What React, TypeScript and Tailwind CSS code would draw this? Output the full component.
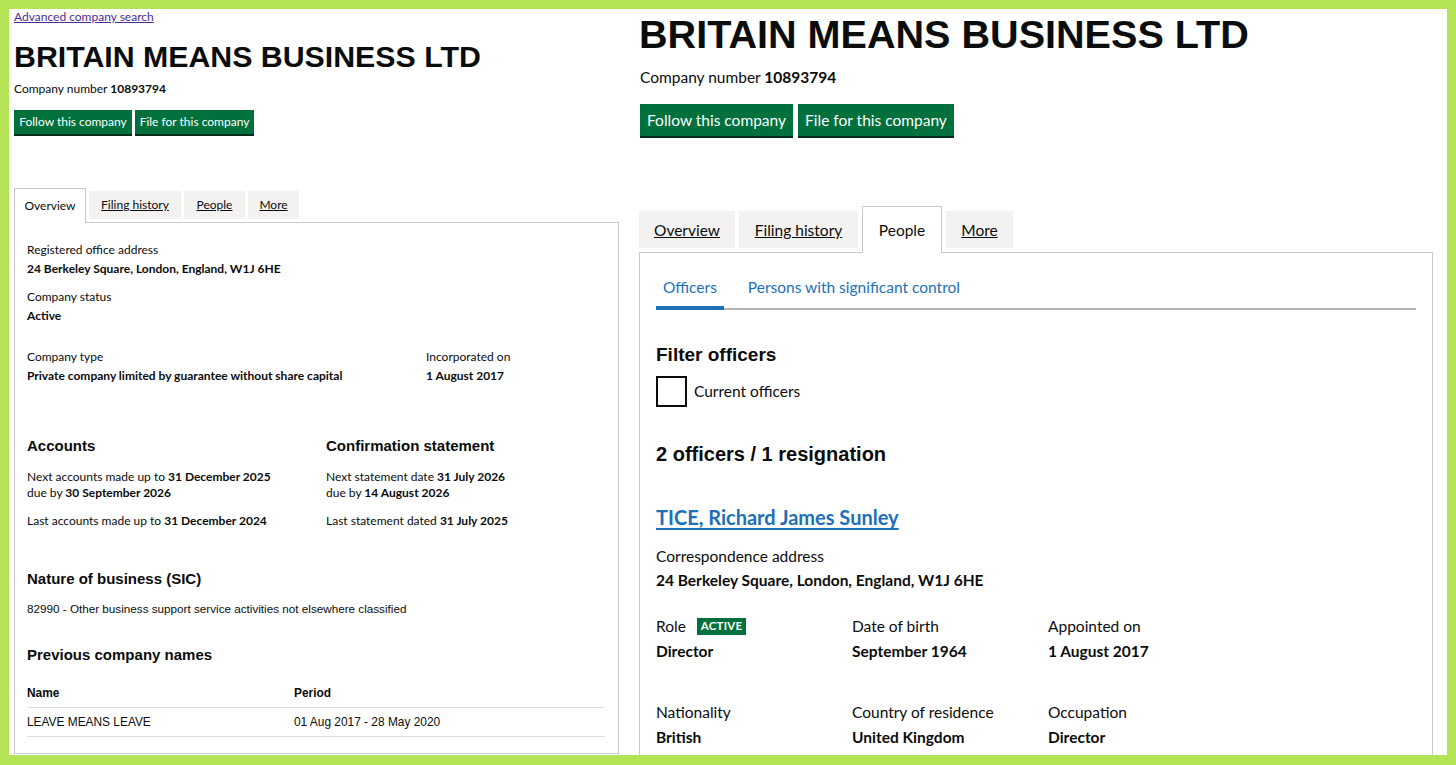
import React from 'react';

const A = "font-['Liberation_Sans',Arial,sans-serif]";

function LeftPanel() {
  return (
    <div className="w-[621px] shrink-0 overflow-hidden pl-[5px] text-[12px] leading-[16px]">
      <a href="#" className="block text-[#4c2c92] underline">Advanced company search</a>
      <h1 className={`${A} mt-[15px] text-[30.3px] leading-[34px] font-bold whitespace-nowrap`}>BRITAIN MEANS BUSINESS LTD</h1>
      <p className="mt-[7px]">Company number <b>10893794</b></p>
      <div className="mt-[13px] flex gap-[3px]">
        <button className="h-[24px] w-[118px] bg-[#00703c] text-white shadow-[0_2px_0_#002d18]">Follow this company</button>
        <button className="h-[24px] w-[119px] bg-[#00703c] text-white shadow-[0_2px_0_#002d18]">File for this company</button>
      </div>

      <div className="mt-[54px] flex items-end gap-[3px]">
        <div className="relative z-10 -mb-px flex h-[35px] w-[72px] items-center justify-center border border-b-0 border-[#c8cacb] bg-white">Overview</div>
        <div className="mb-[3px] flex h-[28px] w-[92px] items-center justify-center bg-[#f3f2f1] underline">Filing history</div>
        <div className="mb-[3px] flex h-[28px] w-[61px] items-center justify-center bg-[#f3f2f1] underline">People</div>
        <div className="mb-[3px] flex h-[28px] w-[51px] items-center justify-center bg-[#f3f2f1] underline">More</div>
      </div>

      <div className="h-[532px] w-[605px] border border-[#c8cacb] pl-[12px] pr-[13px] pt-[19px]">
        <p>Registered office address</p>
        <p className="mt-[3px] font-bold">24 Berkeley Square, London, England, W1J 6HE</p>
        <p className="mt-[12px]">Company status</p>
        <p className="mt-[3px] font-bold">Active</p>

        <div className="mt-[25px] grid grid-cols-[399px_1fr]">
          <div>
            <p>Company type</p>
            <p className="mt-[3px] font-bold">Private company limited by guarantee without share capital</p>
          </div>
          <div>
            <p>Incorporated on</p>
            <p className="mt-[3px] font-bold">1 August 2017</p>
          </div>
        </div>

        <div className="mt-[52px] grid grid-cols-[299px_1fr]">
          <div>
            <h2 className={`${A} text-[15px] leading-[20px] font-bold`}>Accounts</h2>
            <p className="mt-[13px]">Next accounts made up to <b>31 December 2025</b></p>
            <p>due by <b>30 September 2026</b></p>
            <p className="mt-[12px]">Last accounts made up to <b>31 December 2024</b></p>
          </div>
          <div>
            <h2 className={`${A} text-[15px] leading-[20px] font-bold`}>Confirmation statement</h2>
            <p className="mt-[13px]">Next statement date <b>31 July 2026</b></p>
            <p>due by <b>14 August 2026</b></p>
            <p className="mt-[12px]">Last statement dated <b>31 July 2025</b></p>
          </div>
        </div>

        <h2 className={`${A} mt-[40px] text-[15px] leading-[20px] font-bold`}>Nature of business (SIC)</h2>
        <p className={`${A} mt-[12px] text-[11.7px]`}>82990 - Other business support service activities not elsewhere classified</p>

        <h2 className={`${A} mt-[28px] text-[15px] leading-[20px] font-bold`}>Previous company names</h2>
        <div className={`${A} mt-[14px] text-[11.9px]`}>
          <div className="grid h-[29px] grid-cols-[267px_1fr] items-center border-b border-[#dcdedf] font-bold">
            <span>Name</span>
            <span>Period</span>
          </div>
          <div className="grid h-[29px] grid-cols-[267px_1fr] items-center border-b border-[#dcdedf]">
            <span>LEAVE MEANS LEAVE</span>
            <span>01 Aug 2017 - 28 May 2020</span>
          </div>
        </div>
      </div>
    </div>
  );
}

function Field({ label, value, badge }: { label: string; value: string; badge?: boolean }) {
  return (
    <div>
      <div className="flex h-[20px] items-center gap-[11px]">
        <span>{label}</span>
        {badge && (
          <span className="flex h-[17px] items-center bg-[#00703c] px-[4px] text-[11.5px] font-bold tracking-[0.2px] text-white">ACTIVE</span>
        )}
      </div>
      <p className="mt-[5px] font-bold">{value}</p>
    </div>
  );
}

function RightPanel() {
  return (
    <div className="flex-1 overflow-hidden pl-[9px] text-[15.5px] leading-[20px]">
      <h1 className={`${A} mt-[3px] text-[39.6px] leading-[44px] font-bold whitespace-nowrap`}>BRITAIN MEANS BUSINESS LTD</h1>
      <p className="mt-[11px] pl-px">Company number <b>10893794</b></p>
      <div className="mt-[17px] flex gap-[5px] pl-px">
        <button className="h-[32px] w-[153px] bg-[#00703c] text-white shadow-[0_2px_0_#002d18]">Follow this company</button>
        <button className="h-[32px] w-[156px] bg-[#00703c] text-white shadow-[0_2px_0_#002d18]">File for this company</button>
      </div>

      <div className="mt-[70px] flex items-end gap-[4px]">
        <div className="mb-[4px] flex h-[37px] w-[96px] items-center justify-center bg-[#f3f2f1] underline">Overview</div>
        <div className="mb-[4px] flex h-[37px] w-[119px] items-center justify-center bg-[#f3f2f1] underline">Filing history</div>
        <div className="relative z-10 -mb-px flex h-[47px] w-[80px] items-center justify-center border border-b-0 border-[#c8cacb] bg-white">People</div>
        <div className="mb-[4px] flex h-[37px] w-[67px] items-center justify-center bg-[#f3f2f1] underline">More</div>
      </div>

      <div className="h-[520px] w-[794px] border border-b-0 border-[#c8cacb] px-[16px] pt-[16px]">
        <div className="flex gap-[17px] border-b-2 border-[#b1b4b6] text-[#1d70b8]">
          <span className="-mb-[2px] border-b-4 border-[#1d70b8] px-[7px] pb-[9px] pt-[8px]">Officers</span>
          <span className="px-[7px] pb-[9px] pt-[8px]">Persons with significant control</span>
        </div>

        <h2 className={`${A} mt-[33px] text-[19px] leading-[24px] font-bold`}>Filter officers</h2>
        <label className="mt-[9px] flex items-center gap-[7px]">
          <span className="h-[31px] w-[31px] border-2 border-[#0b0c0c]" />
          <span className="-mt-[2px]">Current officers</span>
        </label>

        <h2 className={`${A} mt-[35px] text-[20px] leading-[24px] font-bold`}>2 officers / 1 resignation</h2>

        <a href="#" className="mt-[38px] block text-[20px] leading-[26px] font-bold text-[#1d70b8] underline decoration-[2px] underline-offset-[3px]">TICE, Richard James Sunley</a>

        <p className="mt-[16px]">Correspondence address</p>
        <p className="mt-[4px] font-bold">24 Berkeley Square, London, England, W1J 6HE</p>

        <div className="mt-[26px] grid grid-cols-[196px_196px_1fr]">
          <Field label="Role" value="Director" badge />
          <Field label="Date of birth" value="September 1964" />
          <Field label="Appointed on" value="1 August 2017" />
        </div>
        <div className="mt-[41px] grid grid-cols-[196px_196px_1fr]">
          <Field label="Nationality" value="British" />
          <Field label="Country of residence" value="United Kingdom" />
          <Field label="Occupation" value="Director" />
        </div>
      </div>
    </div>
  );
}

export default function App() {
  return (
    <div className="h-[765px] w-[1456px] overflow-hidden bg-[#b4e455] pb-[10px] pl-[9px] pr-[9px] pt-[9px] font-['Lato','Liberation_Sans',sans-serif] text-[#0b0c0c]">
      <div className="flex h-full overflow-hidden bg-white">
        <LeftPanel />
        <RightPanel />
      </div>
    </div>
  );
}
